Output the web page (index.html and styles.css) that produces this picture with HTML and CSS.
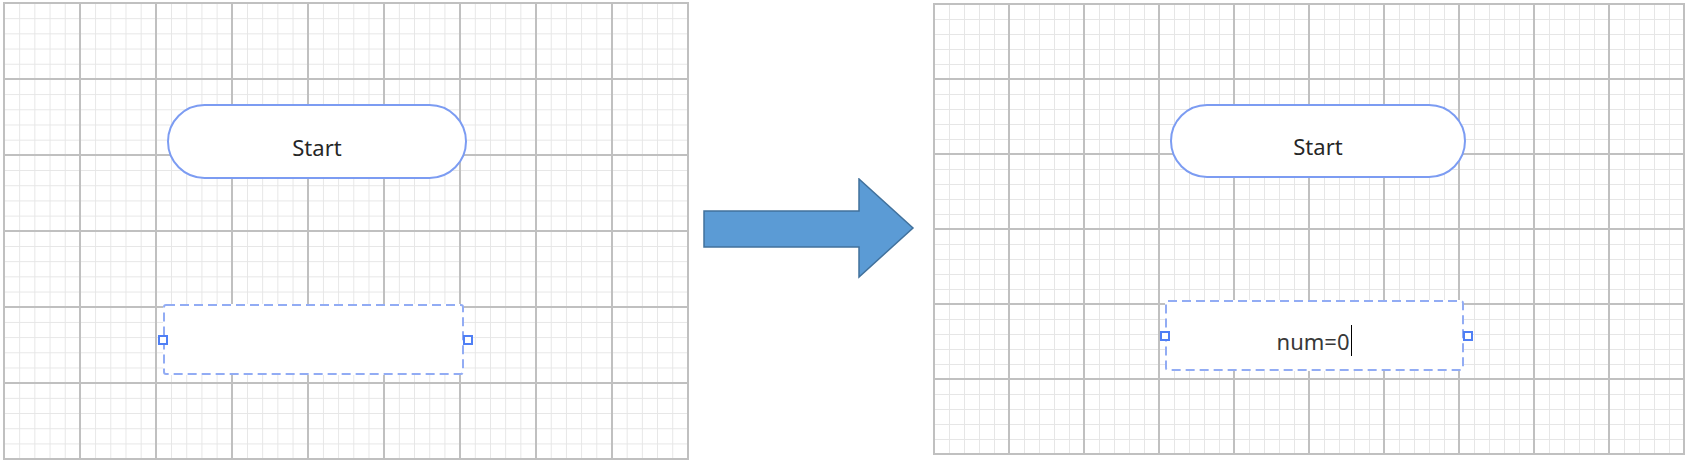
FILE: index.html
```html
<!DOCTYPE html>
<html>
<head>
<meta charset="utf-8">
<link rel="stylesheet" href="styles.css">
</head>
<body>
<div class="stage">
  <div class="canvas canvas-a">
    <div class="node terminal terminal-a"><span class="label">Start</span></div>
    <div class="node process process-a">
      <svg class="dash" width="301" height="71" viewBox="0 0 301 71"><rect x="1" y="1" width="299" height="69" rx="2"/></svg>
      <span class="handle handle-l"></span>
      <span class="handle handle-r"></span>
    </div>
  </div>
  <svg class="arrow" width="212" height="101" viewBox="0 0 212 101">
    <path d="M1 33 H156 V1 L210 50 L156 99 V69 H1 Z"/>
  </svg>
  <div class="canvas canvas-b">
    <div class="node terminal terminal-b"><span class="label">Start</span></div>
    <div class="node process process-b">
      <svg class="dash" width="299" height="71" viewBox="0 0 299 71"><rect x="1" y="1" width="297" height="69" rx="2"/></svg>
      <span class="label label-edit">num=0<span class="caret"></span></span>
      <span class="handle handle-l"></span>
      <span class="handle handle-r"></span>
    </div>
  </div>
</div>
</body>
</html>
```

FILE: styles.css
```css
html, body {
  margin: 0;
  padding: 0;
  background: #ffffff;
}

body {
  width: 1689px;
  height: 461px;
  overflow: hidden;
  font-family: "Noto Sans", "Open Sans", sans-serif;
}

.stage {
  display: flex;
  align-items: flex-start;
}

.canvas {
  position: relative;
  flex: none;
  background-color: #ffffff;
}

.canvas-a {
  margin-left: 3px;
  margin-top: 2px;
  width: 686px;
  height: 458px;
  background-image:
    linear-gradient(to right, #c0c0c0 2px, transparent 2px),
    linear-gradient(to bottom, #c0c0c0 2px, transparent 2px),
    linear-gradient(to right, #e6e6e6 1px, transparent 1px),
    linear-gradient(to bottom, #e6e6e6 1px, transparent 1px);
  background-size: 76px 76px, 76px 76px, 15.2px 15.2px, 15.2px 15.2px;
  background-position: 0 0, 0 0, 1px 1px, 1px 1px;
}

.canvas-b {
  margin-left: 18px;
  margin-top: 3px;
  width: 752px;
  height: 452px;
  background-image:
    linear-gradient(to right, #c0c0c0 2px, transparent 2px),
    linear-gradient(to bottom, #c0c0c0 2px, transparent 2px),
    linear-gradient(to right, #e6e6e6 1px, transparent 1px),
    linear-gradient(to bottom, #e6e6e6 1px, transparent 1px);
  background-size: 75px 75px, 75px 75px, 15px 15px, 15px 15px;
  background-position: 0 0, 0 0, 1px 1px, 1px 1px;
}

.arrow {
  flex: none;
  margin-left: 14px;
  margin-top: 178px;
}

.arrow path {
  fill: #5b9bd5;
  stroke: #41719c;
  stroke-width: 1.5;
  stroke-linejoin: miter;
}

.node {
  position: absolute;
  box-sizing: border-box;
  display: flex;
  align-items: center;
  justify-content: center;
  padding-top: 10px;
}

.label {
  font-size: 22px;
  color: #262626;
  line-height: 30px;
  position: relative;
}

.terminal {
  background: #ffffff;
  border: 2px solid #7c9cf2;
  border-radius: 40px;
}

.terminal-a {
  left: 164px;
  top: 102px;
  width: 300px;
  height: 75px;
}

.terminal-b {
  left: 237px;
  top: 101px;
  width: 296px;
  height: 74px;
}

.process {
  background: #ffffff;
}

.process-a {
  left: 160px;
  top: 302px;
  width: 301px;
  height: 71px;
}

.process-b {
  left: 232px;
  top: 297px;
  width: 299px;
  height: 71px;
}

.dash {
  position: absolute;
  left: 0;
  top: 0;
}

.dash rect {
  fill: #ffffff;
  stroke: #92acf4;
  stroke-width: 2;
  stroke-dasharray: 9 5;
}

.label-edit {
  color: #383838;
  display: flex;
  align-items: center;
}

.caret {
  display: inline-block;
  width: 1px;
  height: 31px;
  background: #000000;
  margin-left: 2px;
}

.handle {
  position: absolute;
  top: 31px;
  width: 10px;
  height: 10px;
  box-sizing: border-box;
  background: #ffffff;
  border: 2px solid #4f7ff5;
}

.handle-l {
  left: -5px;
}

.handle-r {
  right: -9px;
}
```
